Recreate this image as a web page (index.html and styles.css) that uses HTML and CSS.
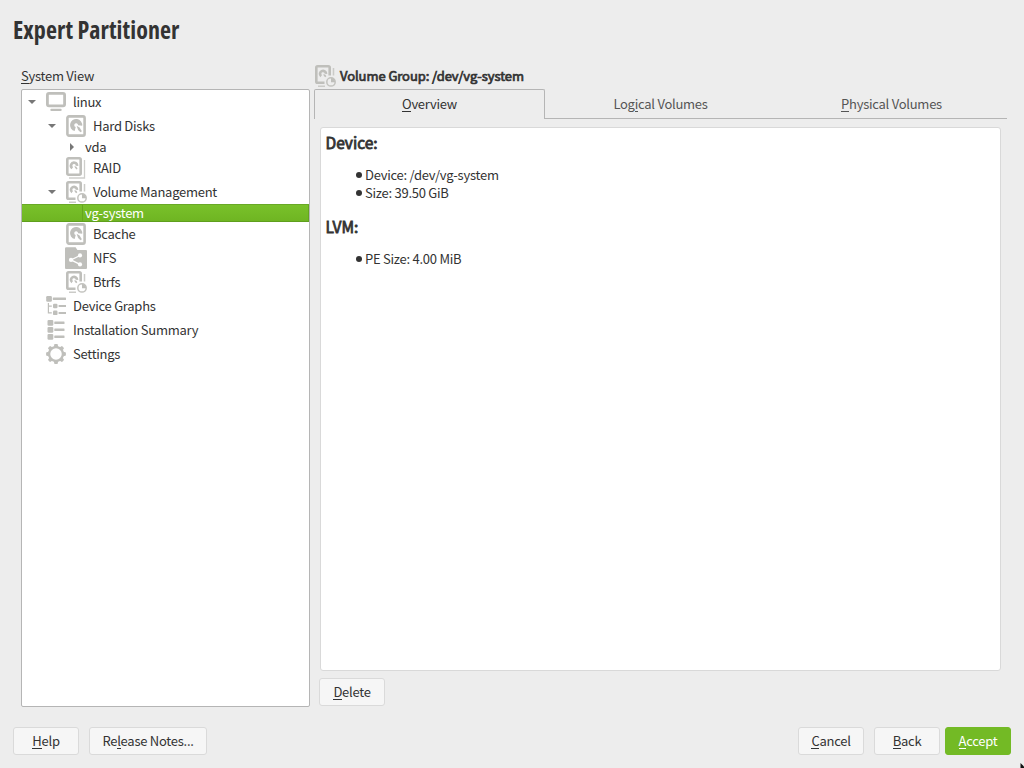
FILE: index.html
```html
<!DOCTYPE html>
<html lang="en">
<head>
<meta charset="utf-8">
<title>Expert Partitioner</title>
<link rel="stylesheet" href="styles.css">
</head>
<body>
<svg class="defs" width="0" height="0" aria-hidden="true">
  <symbol id="i-computer" viewBox="0 0 22 22">
    <rect x="2.4" y="2.3" width="17.2" height="12.6" rx="1.6" fill="none" stroke="#bfbfbb" stroke-width="2.8"/>
    <rect x="5.3" y="17.8" width="11.4" height="2.3" rx="1.1" fill="#bfbfbb"/>
  </symbol>
  <symbol id="i-disk" viewBox="0 0 22 22">
    <rect x="2.4" y="1.4" width="17.2" height="19.2" rx="1.6" fill="none" stroke="#bfbfbb" stroke-width="2.6"/>
    <path d="M10.2 14A4 4 0 1 1 15.1 10.6" fill="none" stroke="#bfbfbb" stroke-width="4.2"/>
    <path d="M11.6 10.8l3 1.6 2.3 3.8-1.4 1.1-2.4-2.4z" fill="#bfbfbb"/>
  </symbol>
  <symbol id="i-raid" viewBox="0 0 22 22">
    <rect x="2.3" y="1.3" width="13.4" height="16.4" rx="1.4" fill="none" stroke="#bfbfbb" stroke-width="2.6"/>
    <path d="M7.4 11.2A3 3 0 1 1 12 8.9" fill="none" stroke="#bfbfbb" stroke-width="2.7"/>
    <path d="M9.4 8.9l2 .8 1.2 2-1 .9-1.5-1.5z" fill="#bfbfbb"/>
    <path d="M19.5 3v18H4" fill="none" stroke="#cececb" stroke-width="1.3"/>
  </symbol>
  <symbol id="i-volume" viewBox="0 0 22 22">
    <path d="M10.5 17.7H3.6a1.3 1.3 0 0 1-1.3-1.3V2.6a1.3 1.3 0 0 1 1.3-1.3h10.8a1.3 1.3 0 0 1 1.3 1.3v8" fill="none" stroke="#bfbfbb" stroke-width="2.6"/>
    <path d="M7.2 11.2A3 3 0 1 1 12 8.9" fill="none" stroke="#bfbfbb" stroke-width="2.7"/>
    <path d="M9.4 8.9l2 .8.9 1.6-1 .9-1.4-1.1z" fill="#bfbfbb"/>
    <path d="M19.5 3v7.5M4 21.2h7" fill="none" stroke="#cbcbc8" stroke-width="1.5"/>
    <circle cx="17" cy="16.9" r="4.2" fill="none" stroke="#c3c3bf" stroke-width="1.5"/>
    <path d="M17 17.3v-4.4a4.3 4.3 0 0 1 4.2 4.4z" fill="#bfbfbb"/>
  </symbol>
  <symbol id="i-share" viewBox="0 0 22 22">
    <path d="M0 1.4Q0 .2 1.2.2h9.4L12.4 3H21q1 0 1 1v17q0 1-1 1H1q-1 0-1-1z" fill="#bfbfbb"/>
    <path d="M15 8.5l-9 4.4 9 4.4" fill="none" stroke="#fff" stroke-width="1.3"/>
    <circle cx="15" cy="8.4" r="2.1" fill="#fff"/><circle cx="6" cy="12.9" r="2.1" fill="#fff"/><circle cx="15" cy="17.4" r="2.1" fill="#fff"/>
  </symbol>
  <symbol id="i-graph" viewBox="0 0 22 22">
    <g fill="#bfbfbb"><rect x="1.2" y="1" width="5.7" height="5.7" rx="1.2"/><rect x="7.8" y="2.5" width="13.2" height="2.5" rx=".5"/>
    <rect x="8" y="8.8" width="4.5" height="4.5" rx="1.2"/><rect x="13.6" y="10" width="7.4" height="2"/>
    <rect x="8" y="15.6" width="4.5" height="4.5" rx="1.2"/><rect x="13.6" y="17" width="7.4" height="2"/></g>
    <path d="M3.4 8v9.9h3.4M3.4 11.1h3.4" fill="none" stroke="#bfbfbb" stroke-width="1.2"/>
  </symbol>
  <symbol id="i-list" viewBox="0 0 22 22">
    <g fill="#bfbfbb"><rect x="2.5" y=".9" width="5.8" height="5.8" rx="1.2"/><rect x="2.5" y="7.9" width="5.8" height="5.8" rx="1.2"/><rect x="2.5" y="14.9" width="5.8" height="5.8" rx="1.2"/>
    <rect x="9.3" y="2.5" width="10.2" height="2.5" rx=".5"/><rect x="9.3" y="9.5" width="10.2" height="2.5" rx=".5"/><rect x="9.3" y="16.5" width="10.2" height="2.5" rx=".5"/></g>
  </symbol>
  <symbol id="i-gear" viewBox="0 0 22 22">
    <circle cx="11" cy="11" r="6.9" fill="none" stroke="#bfbfbb" stroke-width="2.3"/>
    <g fill="#bfbfbb"><path id="tooth" d="M8.8 4l.5-2.4q.2-.5.7-.5h2q.5 0 .7.5l.5 2.4z"/>
    <use href="#tooth" transform="rotate(45 11 11)"/><use href="#tooth" transform="rotate(90 11 11)"/><use href="#tooth" transform="rotate(135 11 11)"/><use href="#tooth" transform="rotate(180 11 11)"/><use href="#tooth" transform="rotate(225 11 11)"/><use href="#tooth" transform="rotate(270 11 11)"/><use href="#tooth" transform="rotate(315 11 11)"/></g>
  </symbol>
</svg>
<div class="window">
  <h1 class="title">Expert Partitioner</h1>
  <main class="main">
    <section class="side">
      <div class="side-label"><u>S</u>ystem View</div>
      <ul class="tree">
        <li class="row l0"><i class="arrow down"></i><svg class="icon"><use href="#i-computer"/></svg><span>linux</span></li>
        <li class="row l1"><i class="arrow down"></i><svg class="icon"><use href="#i-disk"/></svg><span>Hard Disks</span></li>
        <li class="row l2 short"><i class="arrow right"></i><span>vda</span></li>
        <li class="row l1"><i class="arrow"></i><svg class="icon"><use href="#i-raid"/></svg><span>RAID</span></li>
        <li class="row l1"><i class="arrow down"></i><svg class="icon"><use href="#i-volume"/></svg><span>Volume Management</span></li>
        <li class="row short selected"><span class="current">vg-system</span></li>
        <li class="row l1"><i class="arrow"></i><svg class="icon"><use href="#i-disk"/></svg><span>Bcache</span></li>
        <li class="row l1"><i class="arrow"></i><svg class="icon"><use href="#i-share"/></svg><span>NFS</span></li>
        <li class="row l1"><i class="arrow"></i><svg class="icon"><use href="#i-volume"/></svg><span>Btrfs</span></li>
        <li class="row l0"><i class="arrow"></i><svg class="icon"><use href="#i-graph"/></svg><span>Device Graphs</span></li>
        <li class="row l0"><i class="arrow"></i><svg class="icon"><use href="#i-list"/></svg><span>Installation Summary</span></li>
        <li class="row l0"><i class="arrow"></i><svg class="icon"><use href="#i-gear"/></svg><span>Settings</span></li>
      </ul>
    </section>
    <section class="content">
      <header class="heading"><svg class="icon"><use href="#i-volume"/></svg><span>Volume Group: /dev/vg-system</span></header>
      <nav class="tabs">
        <a class="tab active"><span><u>O</u>verview</span></a>
        <a class="tab"><span>Log<u>i</u>cal Volumes</span></a>
        <a class="tab"><span><u>P</u>hysical Volumes</span></a>
      </nav>
      <article class="details">
        <h2>Device:</h2>
        <ul><li>Device: /dev/vg-system</li><li>Size: 39.50 GiB</li></ul>
        <h2>LVM:</h2>
        <ul><li>PE Size: 4.00 MiB</li></ul>
      </article>
      <button class="btn delete"><span><u>D</u>elete</span></button>
    </section>
  </main>
  <footer class="footer">
    <button class="btn"><span><u>H</u>elp</span></button>
    <button class="btn notes"><span>Re<u>l</u>ease Notes...</span></button>
    <span class="spacer"></span>
    <button class="btn cancel"><span><u>C</u>ancel</span></button>
    <button class="btn back"><span><u>B</u>ack</span></button>
    <button class="btn primary"><span><u>A</u>ccept</span></button>
  </footer>
  <svg class="pointer" width="4" height="5" viewBox="0 0 4 5"><path d="M.5 0L4 3.5V5H.5z" fill="#111"/></svg>
</div>
</body>
</html>
```
FILE: styles.css
```css
* { box-sizing: border-box; }
body { margin: 0; background: #ededed; color: #333; font: 13px/18px "Noto Sans CJK SC", "Noto Sans", sans-serif; letter-spacing: -.26px; }
.defs { position: absolute; }
ul { list-style: none; margin: 0; padding: 0; }
u { text-decoration: none; border-bottom: 1px solid currentColor; display: inline-block; line-height: 15px; }
.window { position: relative; width: 1024px; height: 768px; overflow: hidden; display: flex; flex-direction: column; }
.title { margin: 15px 0 0 13px; height: 52px; font: bold 24px/30px "Open Sans", sans-serif; font-stretch: 75%; letter-spacing: .08px; white-space: nowrap; }
.main { display: flex; height: 640px; padding-left: 21px; }
.side { width: 289px; }
.side-label { height: 22px; line-height: 18px; }
.tree { height: 618px; background: #fff; border: 1px solid #b5b5b5; border-radius: 2px; }
.row { height: 24px; display: flex; align-items: center; white-space: nowrap; }
.short { height: 18px; }
.icon { width: 22px; height: 22px; flex: none; }
.row .icon { margin-right: 6px; }
.l0 { padding-left: 3px; }
.l1 { padding-left: 23px; }
.l2 { padding-left: 43px; }
.arrow { width: 20px; height: 8px; flex: none; display: flex; align-items: center; padding-left: 3px; }
.arrow.down::before { content: ""; border: 4px solid transparent; border-top-color: #777; border-bottom: 0; }
.arrow.right::before { content: ""; border: 4px solid transparent; border-left-color: #777; border-right: 0; margin-left: 2px; }
.selected { background: linear-gradient(#79c12a, #6fb522); color: #fff; padding-left: 60px; border-bottom: 1px solid #5f9f1d; border-top: 1px solid #69a926; }
.current { flex: 1; height: 16px; line-height: 16px; border-left: 1px solid #64a51f; border-right: 1px solid #64a51f; padding-left: 2px; }
.content { margin-left: 4px; width: 693px; display: flex; flex-direction: column; }
.heading { height: 22px; display: flex; align-items: center; margin: -2px 0 2px; letter-spacing: -.07px; -webkit-text-stroke: .7px #333; }
.heading .icon { margin-right: 4px; }
.tabs { display: flex; height: 30px; }
.tab { flex: none; width: 231px; display: flex; justify-content: center; align-items: center; border-bottom: 1px solid #b5b5b5; color: #555; }
.active { color: #333; border: 1px solid #b5b5b5; border-bottom: 0; border-radius: 2px 2px 0 0; padding-bottom: 2px; }
.details { margin: 8px 0 0 6px; width: 681px; height: 544px; background: #fff; border: 1px solid #d9d9d9; border-radius: 3px; padding: 3px 4px; }
.details h2 { margin: 0 0 0 .5px; font-size: 15.5px; line-height: 22px; font-weight: 400; letter-spacing: 0; -webkit-text-stroke: .8px #333; }
.details ul { margin: 13px 0 13px 31px; }
.details li { display: flex; align-items: center; height: 18px; }
.details li::before { content: ""; width: 6px; height: 6px; border-radius: 3px; background: #333; margin-right: 3px; }
.btn { font: inherit; letter-spacing: inherit; color: inherit; height: 28px; width: 66px; padding: 0; background: #f6f6f6; border: 1px solid #dadada; border-radius: 3px; display: flex; align-items: center; justify-content: center; white-space: nowrap; }
.delete { margin: 7px 0 0 5px; }
.footer { display: flex; margin-top: 20px; padding: 0 13px; }
.notes { width: 118px; margin-left: 10px; }
.spacer { flex: 1; }
.back { margin: 0 5px 0 10px; }
.primary { background: #73ba25; border-color: #73ba25; color: #fff; }
.pointer { position: absolute; right: 0; bottom: 0; }
```
